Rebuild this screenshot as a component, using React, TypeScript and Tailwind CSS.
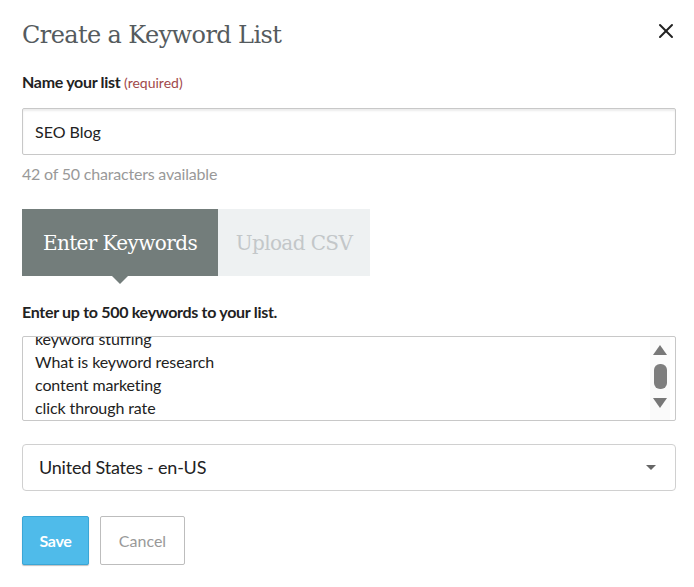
import { X } from "lucide-react";

const keywords = ["keyword stuffing", "What is keyword research", "content marketing", "click through rate"];

export default function App() {
  return (
    <div className="w-[694px] h-[587px] bg-white font-['Lato',sans-serif] text-[#333]">
      <div className="pl-[22px] pr-[18px] pt-[18px]">
        <div className="flex items-start justify-between">
          <h1 className="font-['DejaVu_Serif',serif] text-[24px] leading-[34px] text-[#555b5e] tracking-[-0.6px]">
            Create a Keyword List
          </h1>
          <button className="mt-[1px] -mr-[2px] text-[#222]">
            <X className="w-[24px] h-[24px]" strokeWidth={2} />
          </button>
        </div>

        <div className="mt-[19px] text-[16px] leading-[22px] font-bold text-[#222] tracking-[-0.3px]">
          Name your list <span className="text-[14px] font-normal text-[#a1494b] tracking-normal">(required)</span>
        </div>

        <div className="mt-[14px] h-[47px] border border-[#c8c8c8] rounded-[2px] shadow-[inset_0_2px_2px_rgba(0,0,0,0.08)] flex items-center px-[12px] text-[16px] text-[#222]">
          SEO Blog
        </div>
        <div className="mt-[8px] text-[16px] leading-[22px] text-[#999] tracking-[-0.2px]">42 of 50 characters available</div>

        <div className="mt-[24px] flex">
          <div className="relative w-[196px] h-[67px] bg-[#737d7b] flex items-center justify-center font-['DejaVu_Serif',serif] text-[20px] text-white tracking-[-0.6px]">
            Enter Keywords
            <span className="absolute left-[90px] -bottom-[8px] w-0 h-0 border-l-[8px] border-r-[8px] border-t-[8px] border-l-transparent border-r-transparent border-t-[#737d7b]" />
          </div>
          <div className="w-[152px] h-[67px] bg-[#eef1f2] flex items-center justify-center font-['DejaVu_Serif',serif] text-[20px] text-[#c3c7c9] tracking-[-0.6px]">
            Upload CSV
          </div>
        </div>

        <div className="mt-[25px] text-[16px] leading-[22px] font-bold text-[#222] tracking-[-0.3px]">Enter up to 500 keywords to your list.</div>

        <div className="mt-[13px] h-[85px] border border-[#c8c8c8] rounded-[2px] flex overflow-hidden">
          <div className="flex-1 pl-[12px] -mt-[10px] text-[16px] leading-[23px] text-[#222] tracking-[-0.1px]">
            {keywords.map((k) => (
              <div key={k}>{k}</div>
            ))}
          </div>
          <div className="w-[20px] mr-[5px] flex flex-col items-center pt-[8px] gap-[9px] bg-[#fafafa]">
            <span className="w-0 h-0 border-l-[7px] border-r-[7px] border-b-[10px] border-l-transparent border-r-transparent border-b-[#777]" />
            <span className="w-[13px] h-[25px] rounded-[6px] bg-[#7d7d7d]" />
            <span className="w-0 h-0 border-l-[7px] border-r-[7px] border-t-[10px] border-l-transparent border-r-transparent border-t-[#777]" />
          </div>
        </div>

        <div className="mt-[23px] h-[47px] border border-[#d0d0d0] rounded-[4px] flex items-center justify-between pl-[16px] pr-[19px] text-[18px] text-[#222] tracking-[-0.2px]">
          <span>United States - en-US</span>
          <span className="w-0 h-0 border-l-[5px] border-r-[5px] border-t-[5px] border-l-transparent border-r-transparent border-t-[#666]" />
        </div>

        <div className="mt-[25px] flex gap-[11px]">
          <button className="w-[67px] h-[49px] bg-[#4fbbea] border border-[#3aa6d6] rounded-[2px] text-[16px] font-bold text-white shadow-[0_1px_1px_rgba(0,0,0,0.25)] tracking-[-0.3px]">
            Save
          </button>
          <button className="w-[85px] h-[49px] bg-white border border-[#bdbdbd] rounded-[2px] text-[16px] text-[#999]">
            Cancel
          </button>
        </div>
      </div>
    </div>
  );
}
